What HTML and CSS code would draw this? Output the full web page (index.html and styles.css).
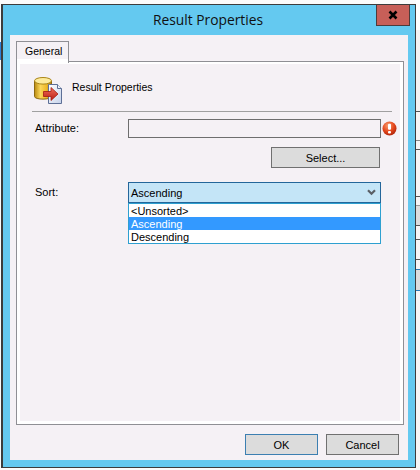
FILE: index.html
```html
<!DOCTYPE html>
<html lang="en">
<head>
<meta charset="utf-8">
<title>Result Properties</title>
<link rel="stylesheet" href="styles.css">
</head>
<body>
<div class="desktop">
  <div class="edge-left"></div>
  <div class="edge-right"></div>
  <div class="window">
    <div class="titlebar">
      <span class="title">Result Properties</span>
      <div class="close">
        <svg width="10" height="10" viewBox="0 0 10 10"><path d="M1.5 1.5 L8.5 8.5 M8.5 1.5 L1.5 8.5" stroke="#000" stroke-width="2.6" fill="none"/></svg>
      </div>
    </div>
    <div class="client">
      <div class="tabs"><div class="tab">General</div></div>
      <div class="pane">
        <div class="pane-inner">
          <div class="header">
            <svg class="db-icon" width="28" height="27" viewBox="0 0 28 27">
              <defs>
                <linearGradient id="cyl" x1="0" x2="1" y1="0" y2="0">
                  <stop offset="0" stop-color="#b98a10"/>
                  <stop offset="0.35" stop-color="#fbd75a"/>
                  <stop offset="0.7" stop-color="#eeb92a"/>
                  <stop offset="1" stop-color="#a9790c"/>
                </linearGradient>
                <linearGradient id="doc" x1="0" x2="1" y1="0" y2="1">
                  <stop offset="0" stop-color="#ffffff"/>
                  <stop offset="1" stop-color="#c6d2ea"/>
                </linearGradient>
                <linearGradient id="arr" x1="0" x2="0" y1="0" y2="1">
                  <stop offset="0" stop-color="#f2705c"/>
                  <stop offset="1" stop-color="#b81a12"/>
                </linearGradient>
              </defs>
              <path d="M0.5 4 V19.5 C0.5 23 17.5 23 17.5 19.5 V4 Z" fill="url(#cyl)" stroke="#8d6a12"/>
              <ellipse cx="9" cy="3.8" rx="8.5" ry="3.3" fill="#fdeb9b" stroke="#a98417"/>
              <path d="M15.5 7.5 H23.5 L27.5 11.5 V26.5 H14.5 V7.5 Z" fill="url(#doc)" stroke="#5d6f96"/>
              <path d="M23.5 7.5 V11.5 H27.5" fill="#eef2fa" stroke="#5d6f96"/>
              <path d="M9.5 14.5 H17 V10.5 L24 17 L17 23.5 V19.5 H9.5 Z" fill="url(#arr)" stroke="#a31a12" stroke-width="0.8"/>
            </svg>
            <span class="header-text">Result Properties</span>
          </div>
          <div class="separator"></div>
          <div class="row row-attribute">
            <label class="label">Attribute:</label>
            <div class="input"></div>
            <svg class="error-icon" width="15" height="15" viewBox="0 0 15 15">
              <defs>
                <radialGradient id="ball" cx="0.4" cy="0.3" r="0.75">
                  <stop offset="0" stop-color="#f8a070"/>
                  <stop offset="0.55" stop-color="#e5471c"/>
                  <stop offset="1" stop-color="#a92108"/>
                </radialGradient>
              </defs>
              <circle cx="7.5" cy="7.5" r="7" fill="url(#ball)"/>
              <rect x="6" y="2.8" width="3" height="6" rx="1" fill="#fff"/>
              <rect x="6" y="10" width="3" height="2.6" rx="1" fill="#fff"/>
            </svg>
          </div>
          <button class="btn btn-select" type="button">Select...</button>
          <div class="row row-sort">
            <label class="label">Sort:</label>
            <div class="combo-wrap">
              <div class="combo">
                <span>Ascending</span>
                <svg width="9" height="7" viewBox="0 0 9 7"><path d="M1 1.2 L4.5 4.7 L8 1.2" stroke="#5a5f66" stroke-width="2.2" fill="none"/></svg>
              </div>
              <ul class="list">
                <li class="item">&lt;Unsorted&gt;</li>
                <li class="item selected">Ascending</li>
                <li class="item">Descending</li>
              </ul>
            </div>
          </div>
        </div>
      </div>
      <div class="footer">
        <button class="btn btn-foot btn-default" type="button">OK</button>
        <button class="btn btn-foot" type="button">Cancel</button>
      </div>
    </div>
  </div>
</div>
</body>
</html>
```

FILE: styles.css
```css
* { box-sizing: border-box; }

html, body {
  margin: 0;
  padding: 0;
}

body {
  background: #fbfbfb;
  font-family: "Liberation Sans", Arial, sans-serif;
  font-size: 11px;
  color: #000;
}

.desktop {
  position: relative;
  width: 420px;
  height: 470px;
  overflow: hidden;
}

.edge-left {
  position: absolute;
  left: 0;
  top: 42px;
  width: 1px;
  height: 18px;
  background: #2f7fd6;
}

.edge-right {
  position: absolute;
  left: 416px;
  top: 0;
  width: 4px;
  height: 470px;
  background: linear-gradient(to bottom,
    #ffffff 0 30px,
    #f3f1f1 30px 111px, #555 111px 112px,
    #f7f5f5 112px 140px, #888 140px 141px,
    #f7f5f5 141px 149px, #555 149px 150px,
    #f7f5f5 150px 196px, #555 196px 197px,
    #f7f5f5 197px 205px, #999 205px 206px,
    #dcdcdc 206px 225px, #555 225px 226px,
    #f7f5f5 226px 239px, #555 239px 240px,
    #f7f5f5 240px 259px, #555 259px 260px,
    #f7f5f5 260px 269px, #2b79b5 269px 270px,
    #dcdcdc 270px 290px, #2b79b5 290px 291px,
    #f7f5f5 291px 470px);
}

.window {
  position: absolute;
  left: 1px;
  top: 4px;
  width: 415px;
  height: 464px;
  display: flex;
  flex-direction: column;
  background: #64c9f0;
  border-style: solid;
  border-color: #3c3c3c;
  border-width: 1px 1px 1px 2px;
}

.titlebar {
  position: relative;
  height: 30px;
  display: flex;
  align-items: center;
  justify-content: center;
  padding: 0 2px 2px 0;
}

.title {
  font-family: "Open Sans", sans-serif;
  font-size: 13.8px;
  color: #101010;
}

.close {
  position: absolute;
  right: 5px;
  top: 0;
  width: 34px;
  height: 21px;
  display: flex;
  align-items: center;
  justify-content: center;
  background: #c75f58;
  border: 1px solid #4d3b3b;
  border-top: none;
}

.client {
  flex: 1;
  margin: 0 7px 7px 7px;
  padding: 6px 4px 0 6px;
  background: #f5f1f5;
  display: flex;
  flex-direction: column;
}

.tabs {
  display: flex;
  height: 20px;
  position: relative;
  z-index: 1;
}

.tab {
  width: 53px;
  height: 22px;
  padding-top: 3px;
  padding-left: 8px;
  font-size: 10.5px;
  background: linear-gradient(to bottom, #f5f1f5 0 17px, #ffffff 17px);
  border: 1px solid #8f8f94;
  border-bottom: none;
}

.pane {
  height: 364px;
  background: #fff;
  border: 1px solid #8f8f94;
  padding: 2px 3px 3px 3px;
}

.pane-inner {
  height: 100%;
  background: #f5f1f5;
  padding-top: 13px;
}

.header {
  display: flex;
  align-items: center;
  gap: 10px;
  padding-left: 14px;
  height: 27px;
}

.header-text {
  font-size: 10.5px;
  padding-bottom: 7px;
}

.separator {
  margin: 7px 8px 0 12px;
  height: 1px;
  background: #a0a0a0;
}

.row {
  display: flex;
  padding-left: 15px;
}

.row-attribute {
  margin-top: 7px;
}

.row-attribute .label {
  padding-top: 3px;
}

.row-sort {
  margin-top: 14px;
}

.label {
  width: 93px;
  flex: none;
}

.row-sort .label {
  padding-top: 4px;
}

.input {
  width: 253px;
  height: 19px;
  background: #f5f1f5;
  border: 1px solid #6e6e6e;
}

.error-icon {
  margin-left: 1px;
  margin-top: 2px;
}

.btn {
  display: block;
  font-family: "Liberation Sans", Arial, sans-serif;
  font-size: 11px;
  color: #000;
  background: #dcdcdc;
  border: 1px solid #707070;
  padding: 0;
  height: 21px;
  border-radius: 0;
}

.btn-select {
  width: 109px;
  margin: 9px 0 0 251px;
}

.combo-wrap {
  width: 253px;
}

.combo {
  height: 21px;
  display: flex;
  align-items: center;
  justify-content: space-between;
  padding: 0 4px 0 2px;
  font-size: 11px;
  background: #c4e5f7;
  border: 1px solid #24669a;
}

.list {
  list-style: none;
  margin: 0;
  padding: 0;
  height: 41px;
  background: #fff;
  border: 1px solid #2ea0d0;
}

.item {
  height: 13px;
  line-height: 14px;
  padding-left: 2px;
  font-size: 11px;
}

.item.selected {
  background: #3399ff;
  color: #fff;
}

.footer {
  display: flex;
  justify-content: flex-end;
  gap: 8px;
  padding: 9px 5px 0 0;
}

.btn-foot {
  width: 73px;
}

.btn-default {
  border-color: #3c7fb1;
}
```
